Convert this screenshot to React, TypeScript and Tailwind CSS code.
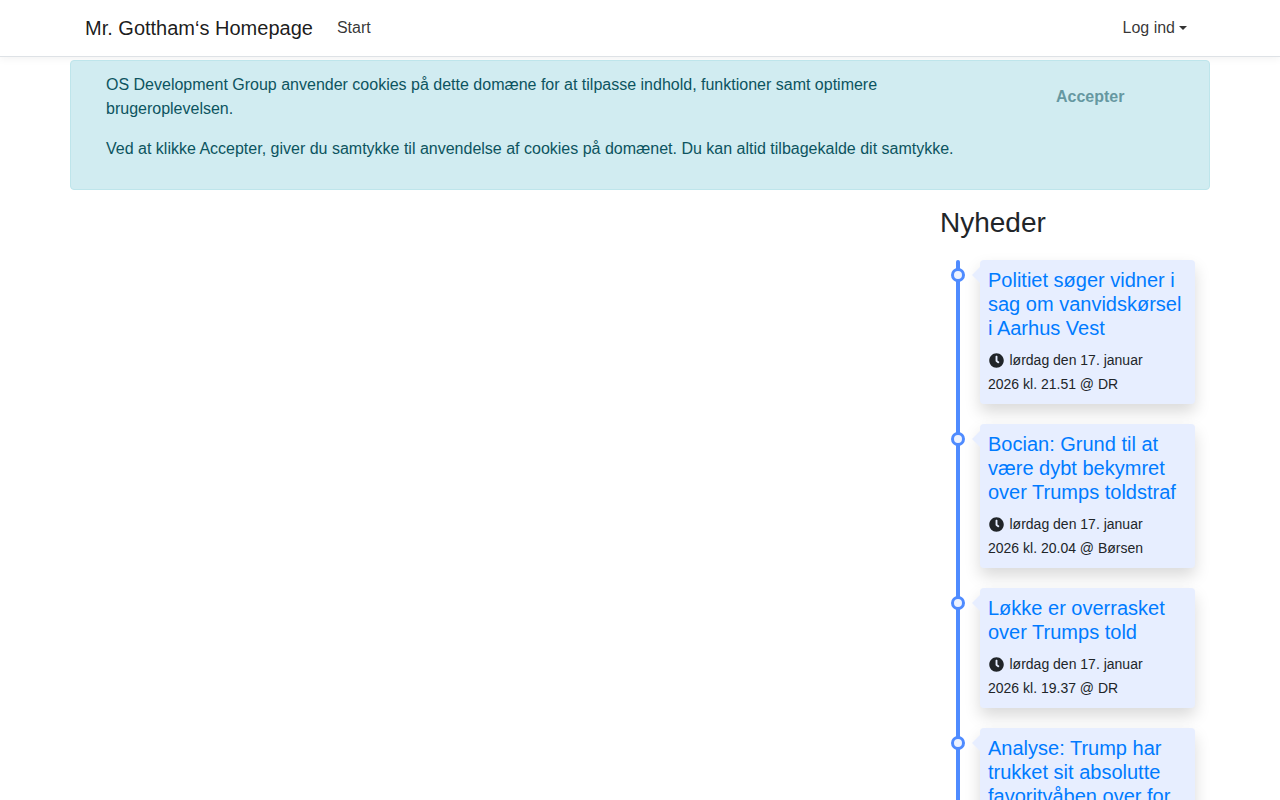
import { FaClock } from "react-icons/fa";

const news = [
  { title: "Politiet søger vidner i sag om vanvidskørsel i Aarhus Vest", time: "lørdag den 17. januar 2026 kl. 21.51", source: "DR" },
  { title: "Bocian: Grund til at være dybt bekymret over Trumps toldstraf", time: "lørdag den 17. januar 2026 kl. 20.04", source: "Børsen" },
  { title: "Løkke er overrasket over Trumps told", time: "lørdag den 17. januar 2026 kl. 19.37", source: "DR" },
  { title: "Analyse: Trump har trukket sit absolutte favoritvåben over for Europa", time: "lørdag den 17. januar 2026 kl. 18.12", source: "DR" },
];

export default function App() {
  return (
    <div className="h-screen overflow-hidden bg-white text-[16px] leading-6 text-[#212529] antialiased font-['Liberation_Sans',Arial,sans-serif]">
      <nav className="h-[57px] border-b border-[#dee2e6] bg-white shadow-[0_2px_8px_rgba(0,0,0,0.05)]">
        <div className="mx-auto flex h-14 w-[1140px] items-center px-[15px]">
          <a className="mr-4 text-[20px] leading-[30px] text-[rgba(0,0,0,0.9)]">Mr. Gottham‘s Homepage</a>
          <a className="px-2 text-[rgba(0,0,0,0.8)]">Start</a>
          <a className="ml-auto flex items-center px-2 text-[rgba(0,0,0,0.8)]">
            Log ind
            <span className="ml-[4px] mt-[-1px] h-0 w-0 border-x-[4.8px] border-t-[4.8px] border-x-transparent border-t-[rgba(0,0,0,0.8)]" />
          </a>
        </div>
      </nav>

      <main className="mx-auto w-[1140px]">
        <div className="mt-[3px] flex rounded border border-[#bee5eb] bg-[#d1ecf1] py-3 pl-[35px] text-[#0c5460]">
          <div className="w-[917px] shrink-0">
            <p className="mb-4 pr-[50px]">
              OS Development Group anvender cookies på dette domæne for at tilpasse indhold, funktioner samt optimere brugeroplevelsen.
            </p>
            <p className="mb-4 whitespace-nowrap">
              Ved at klikke Accepter, giver du samtykke til anvendelse af cookies på domænet. Du kan altid tilbagekalde dit samtykke.
            </p>
          </div>
          <div className="pl-[20px] pt-[5px]">
            <button className="h-[38px] border border-transparent px-3 font-bold text-[#0c5460] opacity-[0.55]">Accepter</button>
          </div>
        </div>

        <div className="ml-[870px] w-[270px]">
          <h3 className="mt-[16px] mb-[20px] text-[28px] leading-[34px] text-[#212529]">Nyheder</h3>
          <ul className="relative ml-4 flex w-[239px] flex-col gap-5 pl-6">
            <span className="absolute left-0 top-0 h-[600px] w-1 rounded-full bg-[#4f8bff]" />
            {news.map((n) => (
              <li key={n.title} className="relative w-[215px] rounded bg-[#e7eeff] p-2 shadow-[0_8px_16px_rgba(0,0,0,0.15)]">
                <span className="absolute left-[-29px] top-2 h-[14px] w-[14px] rounded-full border-[3.5px] border-[#4f8bff] bg-[#eef3ff]" />
                <span className="absolute left-[-8px] top-[7px] h-0 w-0 border-y-[8px] border-r-[8px] border-y-transparent border-r-[#e7eeff]" />
                <a className="mb-2 block text-[20px] leading-6 text-[#007bff]">{n.title}</a>
                <div className="pr-[30px] text-[14px] leading-6 text-[#212529]">
                  <FaClock className="mb-[2px] ml-[1px] mr-[5.5px] inline-block h-[15px] w-[15px]" />
                  {n.time} @ {n.source}
                </div>
              </li>
            ))}
          </ul>
        </div>
      </main>
    </div>
  );
}
